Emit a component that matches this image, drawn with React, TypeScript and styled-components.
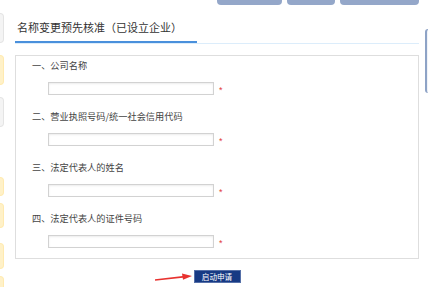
import React from 'react';
import styled, { createGlobalStyle } from 'styled-components';

const GlobalStyle = createGlobalStyle`
  html, body {
    margin: 0;
    padding: 0;
    background: #fff;
  }
  body {
    font-family: "Noto Sans CJK SC", "Noto Sans", "Liberation Sans", sans-serif;
    color: #333;
  }
`

const fields = [
  '一、公司名称',
  '二、营业执照号码/统一社会信用代码',
  '三、法定代表人的姓名',
  '四、法定代表人的证件号码',
];

const leftTabs: { tone: 'grey' | 'yellow'; top: number; height: number }[] = [
  { tone: 'grey', top: 13, height: 30 },
  { tone: 'yellow', top: 12, height: 30 },
  { tone: 'grey', top: 12, height: 30 },
  { tone: 'yellow', top: 50, height: 19 },
  { tone: 'yellow', top: 7, height: 25 },
  { tone: 'yellow', top: 15, height: 26 },
  { tone: 'yellow', top: 7, height: 20 },
];

export default function App() {
  return (
    <>
      <GlobalStyle />
      <SPage>
        <SLeftRail>
          {leftTabs.map((t, i) => (
            <SRailTab key={i} $tone={t.tone} $gap={t.top} $h={t.height} />
          ))}
        </SLeftRail>

        <SMain>
          <STopBar>
            <STopButton $w={65} />
            <STopButton $w={48} />
            <STopButton $w={79} />
          </STopBar>

          <SHeader>
            <STitle>名称变更预先核准（已设立企业）</STitle>
          </SHeader>

          <SFormBox>
            {fields.map((label) => (
              <SField key={label}>
                <SLabel>{label}</SLabel>
                <SInputRow>
                  <SInput type="text" />
                  <SStar>*</SStar>
                </SInputRow>
              </SField>
            ))}
          </SFormBox>

          <SActions>
            <SButtonWrap>
              <SArrow width="38" height="8" viewBox="0 0 38 8">
                <path d="M0 7 L30 3.6" stroke="#e8322f" strokeWidth="1.6" fill="none" />
                <path d="M27 0.6 L37 3 L28 6.8 Z" fill="#e8322f" />
              </SArrow>
              <SSubmit>启动申请</SSubmit>
            </SButtonWrap>
          </SActions>
        </SMain>

        <SRightRail>
          <SRightTab />
        </SRightRail>
      </SPage>
    </>
  )
}

const SPage = styled.div`
  display: flex;
  width: 428px;
  height: 287px;
  overflow: hidden;
`

const SLeftRail = styled.div`
  width: 5px;
  display: flex;
  flex-direction: column;
`

const SRailTab = styled.div<{ $tone: 'grey' | 'yellow'; $gap: number; $h: number }>`
  margin-top: ${(p) => p.$gap}px;
  height: ${(p) => p.$h}px;
  width: 4px;
  flex-shrink: 0;
  border-radius: 0 4px 4px 0;
  background: ${(p) => (p.$tone === 'grey' ? '#f4f4f4' : '#fff1c8')};
  border: 1px solid ${(p) => (p.$tone === 'grey' ? '#e4e4e4' : '#ffeab0')};
  border-left: none;
  box-sizing: border-box;
`

const SMain = styled.div`
  width: 404px;
  margin-left: 10px;
  display: flex;
  flex-direction: column;
`

const STopBar = styled.div`
  display: flex;
  justify-content: flex-end;
  gap: 5px;
  height: 5px;
`

const STopButton = styled.div<{ $w: number }>`
  width: ${(p) => p.$w}px;
  height: 5px;
  background: #94a7c9;
  border-radius: 0 0 4px 4px;
`

const SHeader = styled.div`
  display: flex;
  align-items: flex-start;
  padding-top: 14px;
  border-bottom: 1px solid #dcedfb;
  height: 24px;
`

const STitle = styled.div`
  box-sizing: border-box;
  width: 182px;
  padding-left: 2px;
  font-size: 11px;
  line-height: 16px;
  color: #333;
  padding-bottom: 6px;
  margin-bottom: -1px;
  border-bottom: 2px solid #4a90dc;
`

const SFormBox = styled.div`
  margin-top: 11px;
  border: 1px solid #dedede;
  padding: 2px 0 10px 16px;
  display: flex;
  flex-direction: column;
  gap: 14px;
`

const SField = styled.div`
  display: flex;
  flex-direction: column;
  gap: 10px;
`

const SLabel = styled.div`
  font-size: 9.2px;
  line-height: 14px;
  color: #444;
`

const SInputRow = styled.div`
  display: flex;
  align-items: center;
  padding-left: 16px;
`

const SInput = styled.input`
  width: 166px;
  height: 13px;
  box-sizing: border-box;
  margin: 0;
  padding: 0 3px;
  border: 1px solid #d2d2d2;
  box-shadow: inset 0 1px 2px rgba(0, 0, 0, 0.08);
  background: #fff;
  outline: none;
`

const SStar = styled.span`
  margin-left: 5px;
  margin-top: 4px;
  color: #e23a3a;
  font-size: 9px;
  line-height: 9px;
  font-family: "Liberation Sans", sans-serif;
`

const SActions = styled.div`
  margin-top: 11px;
  display: flex;
  justify-content: center;
`

const SButtonWrap = styled.div`
  position: relative;
  display: flex;
`

const SArrow = styled.svg`
  position: absolute;
  left: -39px;
  top: 3px;
`

const SSubmit = styled.button`
  width: 47px;
  height: 13px;
  box-sizing: border-box;
  margin: 0;
  padding: 0;
  background: #173a84;
  border: 1px solid #5670a8;
  color: #fff;
  font-family: "Noto Sans CJK SC", sans-serif;
  font-size: 7.6px;
  line-height: 11px;
`

const SRightRail = styled.div`
  margin-left: 6px;
  flex: 1;
  padding-top: 29px;
`

const SRightTab = styled.div`
  height: 63px;
  background: #f0f3f8;
  border-left: 2px solid #8ea3c6;
  border-top: 1px solid #8ea3c6;
  border-radius: 3px 0 0 3px;
`
